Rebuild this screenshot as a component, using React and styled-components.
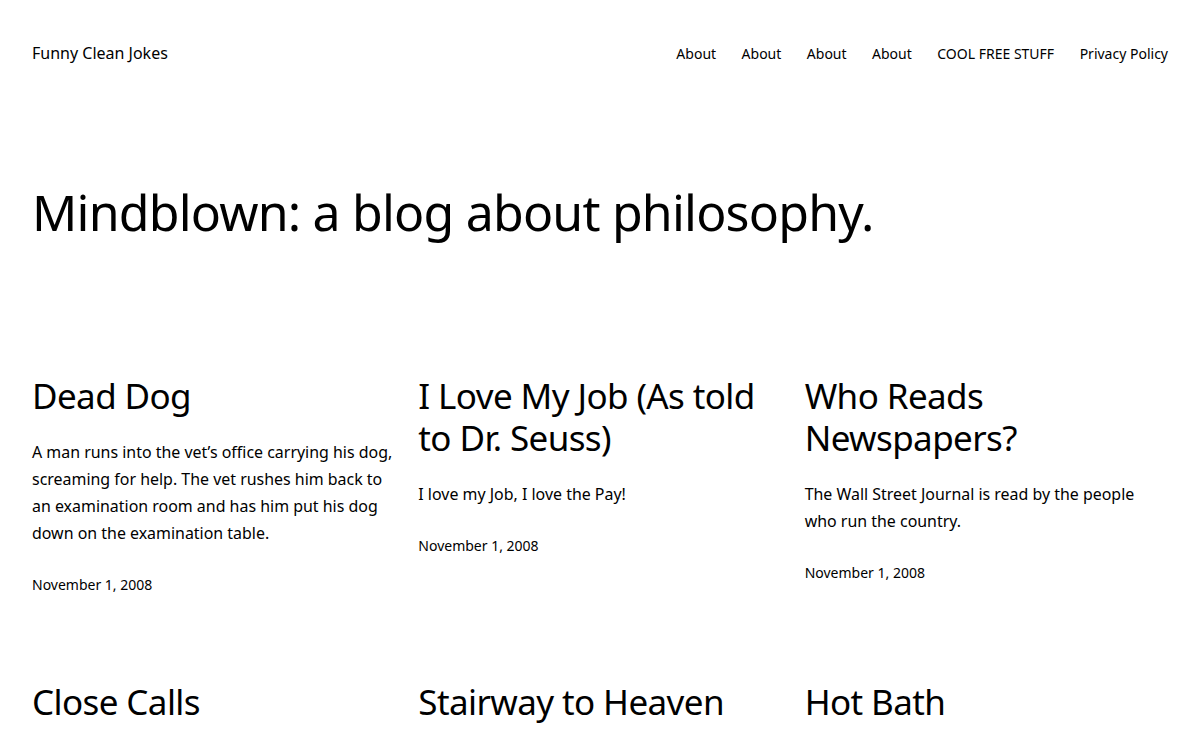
import React from 'react';
import styled, { createGlobalStyle } from 'styled-components';

const GlobalStyle = createGlobalStyle`
  html, body {
    margin: 0;
    padding: 0;
    background: #ffffff;
  }
  body {
    font-family: "Noto Sans", "Open Sans", sans-serif;
    color: #000000;
    -webkit-font-smoothing: antialiased;
  }
  a {
    color: inherit;
    text-decoration: none;
  }
`;

const posts = [
  {
    title: 'Dead Dog',
    excerpt:
      'A man runs into the vet’s office carrying his dog, screaming for help. The vet rushes him back to an examination room and has him put his dog down on the examination table.',
    date: 'November 1, 2008',
  },
  {
    title: 'I Love My Job (As told to Dr. Seuss)',
    excerpt: 'I love my Job, I love the Pay!',
    date: 'November 1, 2008',
  },
  {
    title: 'Who Reads Newspapers?',
    excerpt: 'The Wall Street Journal is read by the people who run the country.',
    date: 'November 1, 2008',
  },
  { title: 'Close Calls', excerpt: '', date: 'November 1, 2008' },
  { title: 'Stairway to Heaven', excerpt: '', date: 'November 1, 2008' },
  { title: 'Hot Bath', excerpt: '', date: 'November 1, 2008' },
];

const navItems = ['About', 'About', 'About', 'About', 'COOL FREE STUFF', 'Privacy Policy'];

function App() {
  return (
    <Page>
      <GlobalStyle />
      <Header>
        <SiteTitle href="/">Funny Clean Jokes</SiteTitle>
        <Nav>
          {navItems.map((item, i) => (
            <NavLink key={i} href="/">
              {item}
            </NavLink>
          ))}
        </Nav>
      </Header>
      <Main>
        <PageHeading>Mindblown: a blog about philosophy.</PageHeading>
        <PostGrid>
          {posts.map((post, i) => (
            <Post key={i}>
              <PostTitle>
                <a href="/">{post.title}</a>
              </PostTitle>
              {post.excerpt && <Excerpt>{post.excerpt}</Excerpt>}
              <PostDate>{post.date}</PostDate>
            </Post>
          ))}
        </PostGrid>
      </Main>
    </Page>
  );
}

const Page = styled.div`
  min-height: 100vh;
  padding: 0 32px;
`;

const Header = styled.header`
  display: flex;
  justify-content: space-between;
  align-items: center;
  padding-top: 40px;
`;

const SiteTitle = styled.a`
  font-size: 16px;
  line-height: 27px;
`;

const Nav = styled.nav`
  display: flex;
  gap: 25.5px;
`;

const NavLink = styled.a`
  font-size: 14px;
  line-height: 27px;
`;

const Main = styled.main`
  padding-top: 114px;
`;

const PageHeading = styled.h1`
  margin: 0;
  font-size: 50px;
  font-weight: 400;
  line-height: 62px;
  letter-spacing: -0.8px;
`;

const PostGrid = styled.div`
  display: grid;
  grid-template-columns: repeat(3, 1fr);
  column-gap: 23px;
  row-gap: 84px;
  margin-top: 132px;
`;

const Post = styled.article`
  display: flex;
  flex-direction: column;
`;

const PostTitle = styled.h2`
  margin: 0;
  font-size: 35px;
  font-weight: 400;
  line-height: 42px;
  letter-spacing: -0.6px;
`;

const Excerpt = styled.p`
  margin: 22px 0 0;
  font-size: 15.95px;
  line-height: 27px;
`;

const PostDate = styled.div`
  margin-top: 26px;
  font-size: 14px;
  line-height: 24px;
`;

export default App;
